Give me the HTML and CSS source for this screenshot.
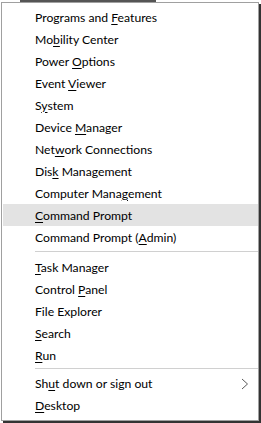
FILE: index.html
```html
<!DOCTYPE HTML>
<html>
  <head>
    <title>Win+X</title>
    <meta charset="utf-8" />
    <link rel="stylesheet" href="styles.css">
  </head>
  <body>
    <div class="peek"></div>
    <div class="menu">
      <ul class="group">
        <li><a href="#"><span>Programs and <u>F</u>eatures</span></a></li>
        <li><a href="#"><span>Mo<u>b</u>ility Center</span></a></li>
        <li><a href="#"><span>Power <u>O</u>ptions</span></a></li>
        <li><a href="#"><span>Event <u>V</u>iewer</span></a></li>
        <li><a href="#"><span>S<u>y</u>stem</span></a></li>
        <li><a href="#"><span>Device <u>M</u>anager</span></a></li>
        <li><a href="#"><span>Net<u>w</u>ork Connections</span></a></li>
        <li><a href="#"><span>Dis<u>k</u> Management</span></a></li>
        <li><a href="#"><span>Computer Mana<u>g</u>ement</span></a></li>
        <li class="hover"><a href="#"><span><u>C</u>ommand Prompt</span></a></li>
        <li><a href="#"><span>Command Prompt (<u>A</u>dmin)</span></a></li>
      </ul>
      <div class="sep"></div>
      <ul class="group">
        <li><a href="#"><span><u>T</u>ask Manager</span></a></li>
        <li><a href="#"><span>Control <u>P</u>anel</span></a></li>
        <li><a href="#"><span>File Explorer</span></a></li>
        <li><a href="#"><span><u>S</u>earch</span></a></li>
        <li><a href="#"><span><u>R</u>un</span></a></li>
      </ul>
      <div class="sep sep2"></div>
      <ul class="group">
        <li><a href="#" class="sub"><span>Sh<u>u</u>t down or sign out</span>
          <svg width="8" height="12" viewBox="0 0 8 12"><polyline points="1,1 6.5,6 1,11" fill="none" stroke="#5a5a5a" stroke-width="1"/></svg></a></li>
        <li><a href="#"><span><u>D</u>esktop</span></a></li>
      </ul>
    </div>
  </body>
</html>
```
FILE: styles.css
```css
*{
  margin:0;
  padding:0;
}
body{
  width:261px;
  height:423px;
  background:#fff;
  font-family:Lato,"Noto Sans",sans-serif;
  font-size:12.2px;
  color:#000;
  overflow:hidden;
}
/* edge of the window behind the menu */
.peek{
  height:2px;
  margin-left:20px;
  width:136px;
  background:#555;
}
.menu{
  margin-left:1px;
  width:258px;
  height:419px;
  border:1px solid #a0a0a0;
  box-shadow:2px 2px 0 #333;
  box-sizing:border-box;
  padding:3px 0 0;
}
.group li{
  list-style:none;
}
.group li a{
  display:flex;
  align-items:center;
  justify-content:space-between;
  height:22px;
  margin-left:1px;
  padding:0 9px 0 32px;
  text-decoration:none;
  color:#000;
}
.group li.hover a{
  background:#e3e3e3;
}
.group u{
  text-decoration-thickness:1px;
  text-underline-offset:2px;
}
.sub svg{
  margin-top:1px;
}
.sep{
  height:1px;
  background:#d0d0d0;
  margin:3px 0 4px 33px;
}
.sep2{
  margin:2px 0 3px 33px;
}
```
